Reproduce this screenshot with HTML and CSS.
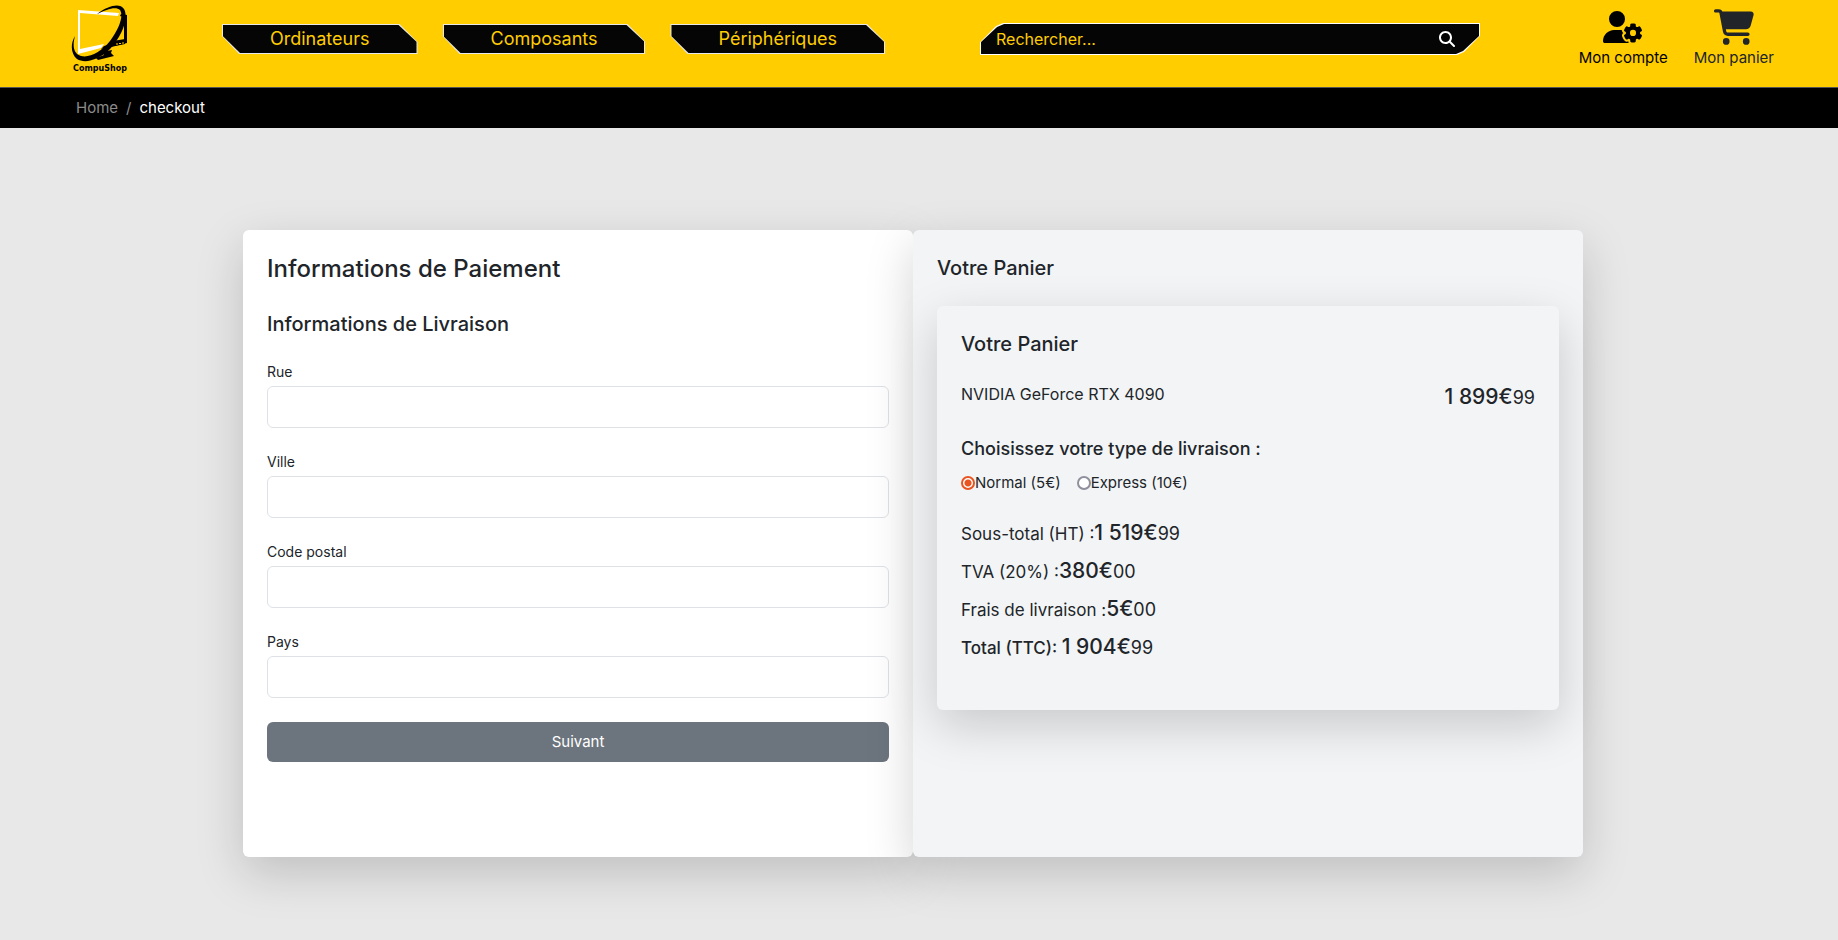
FILE: index.html
```html
<!DOCTYPE html>
<html lang="fr">
<head>
<meta charset="utf-8">
<meta name="viewport" content="width=device-width, initial-scale=1">
<title>CompuShop - checkout</title>
<link rel="stylesheet" href="styles.css">
</head>
<body>
<header class="navbar">
  <a class="logo" href="#" aria-label="CompuShop">
    <svg class="logo-mark" viewBox="0 0 60 58" aria-hidden="true">
      <path d="M51 10L57 11V39L31 45L34 42L54 37V13L50 12Z" fill="#000"/>
      <path d="M43 37L55 35V40L36 44Z" fill="#000"/>
      <path d="M46 40h2M49 39.500h2M52 39h2" stroke="#ffcd00" stroke-width="1"/>
      <path d="M8 6L49 9L48 12L10 9V45L34 40L31 44L8 50Z" fill="#fff"/>
      <path d="M32 48L42 46L41 49L44 52L28 56L26 54L34 51Z" fill="#000"/>
      <path d="M27 10C39 1 50-1 54 5C59 14 52 32 40 45C29 56 15 60 7 55C1 50 0 40 5 32C2 43 4 50 11 52C20 54 31 48 40 37C49 25 54 12 50 6C46 2 37 5 27 10Z" fill="#000"/>
    </svg>
    <span class="logo-name">CompuShop</span>
  </a>
  <nav class="menu">
    <a class="menu-link" href="#"><span>Ordinateurs</span></a>
    <a class="menu-link" href="#"><span>Composants</span></a>
    <a class="menu-link" href="#"><span>Périphériques</span></a>
  </nav>
  <form class="search" role="search">
    <div class="search-box">
      <input class="search-input" type="search" placeholder="Rechercher..." aria-label="Rechercher">
      <button class="search-button" type="button" aria-label="Lancer la recherche">
        <svg viewBox="0 0 512 512" aria-hidden="true"><path fill="currentColor" d="M416 208c0 45.900-14.900 88.300-40 122.700L502.600 457.400c12.500 12.500 12.500 32.800 0 45.300s-32.800 12.500-45.300 0L330.700 376c-34.400 25.200-76.800 40-122.700 40C93.100 416 0 322.900 0 208S93.100 0 208 0S416 93.100 416 208zM208 352a144 144 0 1 0 0-288 144 144 0 1 0 0 288z"/></svg>
      </button>
    </div>
  </form>
  <div class="account">
    <a class="account-link" href="#">
      <svg class="icon-user" viewBox="0 0 640 512" aria-hidden="true"><path fill="currentColor" d="M224 0a128 128 0 1 1 0 256A128 128 0 1 1 224 0zM178.300 304h91.400c11.800 0 23.400 1.200 34.500 3.300c-2.100 18.500 7.400 35.600 21.800 44.800c-16.600 10.600-26.700 31.600-20 53.300c4 12.900 9.400 25.500 16.400 37.600s15.200 23.100 24.400 33c15.700 16.900 39.600 18.400 57.200 8.700v.9c0 9.200 2.700 18.500 7.900 26.300H29.700C13.300 512 0 498.700 0 482.300C0 383.800 79.800 304 178.300 304zM436 218.200c0-7 4.500-13.300 11.300-14.800c10.500-2.400 21.500-3.700 32.700-3.700s22.200 1.300 32.700 3.700c6.800 1.500 11.300 7.800 11.300 14.800v17.700c0 7.800 4.800 14.800 11.600 18.700c6.800 3.900 15.100 4.500 21.800 .6l13.800-7.900c6.100-3.500 13.700-2.700 18.500 2.400c7.600 8.100 14.300 17.200 20.100 27.200s10.300 20.400 13.500 31c2.100 6.700-1.100 13.700-7.200 17.200l-14.400 8.300c-6.500 3.700-10 10.900-10 18.400s3.500 14.700 10 18.400l14.400 8.300c6.100 3.500 9.200 10.500 7.200 17.200c-3.300 10.600-7.800 21-13.500 31s-12.500 19.100-20.100 27.200c-4.800 5.100-12.500 5.900-18.500 2.400l-13.800-7.900c-6.700-3.900-15.100-3.300-21.800 .6c-6.800 3.900-11.600 10.900-11.600 18.700v17.700c0 7-4.500 13.300-11.300 14.800c-10.500 2.400-21.500 3.700-32.700 3.700s-22.200-1.300-32.700-3.700c-6.800-1.500-11.300-7.800-11.300-14.800V467.800c0-7.900-4.900-14.900-11.700-18.900c-6.800-3.900-15.200-4.500-22-.6l-13.500 7.800c-6.100 3.500-13.700 2.700-18.500-2.400c-7.600-8.100-14.300-17.200-20.100-27.200s-10.300-20.400-13.500-31c-2.100-6.700 1.100-13.700 7.200-17.200l14-8.100c6.500-3.800 10.100-11.100 10.100-18.600s-3.500-14.800-10.100-18.600l-14-8.100c-6.100-3.500-9.200-10.500-7.200-17.200c3.300-10.600 7.700-21 13.500-31s12.500-19.100 20.100-27.200c4.800-5.100 12.400-5.900 18.500-2.400l13.600 7.800c6.800 3.900 15.200 3.300 22-.6c6.900-3.900 11.700-11 11.700-18.900V218.200zm92.100 133.500a48.100 48.100 0 1 0-96.100 0 48.100 48.100 0 1 0 96.100 0z"/></svg>
      <span>Mon compte</span>
    </a>
    <a class="account-link account-cart" href="#">
      <svg class="icon-cart" viewBox="0 0 576 512" aria-hidden="true"><path fill="currentColor" d="M0 24C0 10.700 10.700 0 24 0H69.500c22 0 41.500 12.800 50.600 32h411c26.300 0 45.500 25 38.600 50.400l-41 152.300c-8.500 31.400-37 53.300-69.500 53.300H170.700l5.400 28.500c2.200 11.300 12.100 19.500 23.600 19.500H488c13.300 0 24 10.700 24 24s-10.700 24-24 24H199.700c-34.600 0-64.300-24.600-70.700-58.500L77.400 54.500c-.7-3.800-4-6.500-7.900-6.500H24C10.700 48 0 37.300 0 24zM128 464a48 48 0 1 1 96 0 48 48 0 1 1 -96 0zm336-48a48 48 0 1 1 0 96 48 48 0 1 1 0-96z"/></svg>
      <span>Mon panier</span>
    </a>
  </div>
</header>
<nav class="breadcrumb" aria-label="Fil d'Ariane">
  <a class="breadcrumb-link" href="#">Home</a>
  <span class="breadcrumb-separator">/</span>
  <span>checkout</span>
</nav>
<main class="page">
  <div class="checkout">
    <section class="card card-form">
      <h1 class="title-large">Informations de Paiement</h1>
      <h2 class="title">Informations de Livraison</h2>
      <form class="address">
        <div class="field"><label for="street">Rue</label><input id="street" type="text"></div>
        <div class="field"><label for="city">Ville</label><input id="city" type="text"></div>
        <div class="field"><label for="zip">Code postal</label><input id="zip" type="text"></div>
        <div class="field"><label for="country">Pays</label><input id="country" type="text"></div>
        <button class="submit" type="button">Suivant</button>
      </form>
    </section>
    <section class="card card-cart">
      <h2 class="title">Votre Panier</h2>
      <div class="card card-summary">
        <h2 class="title">Votre Panier</h2>
        <div class="item">
          <span>NVIDIA GeForce RTX 4090</span>
          <span class="price">1 899€<small>99</small></span>
        </div>
        <h3 class="subtitle">Choisissez votre type de livraison :</h3>
        <div class="delivery">
          <label class="option"><input type="radio" name="delivery" checked>Normal (5€)</label>
          <label class="option"><input type="radio" name="delivery">Express (10€)</label>
        </div>
        <div class="totals">
          <p>Sous-total (HT) :<span class="price">1 519€<small>99</small></span></p>
          <p>TVA (20%) :<span class="price">380€<small>00</small></span></p>
          <p>Frais de livraison :<span class="price">5€<small>00</small></span></p>
          <p class="grand-total">Total (TTC): <span class="price">1 904€<small>99</small></span></p>
        </div>
      </div>
    </section>
  </div>
</main>
</body>
</html>
```

FILE: styles.css
```css
* {
  box-sizing: border-box;
}

body {
  margin: 0;
  min-height: 100vh;
  background: #e8e8e8;
  color: #212529;
  font: 16px/24px Inter, "Open Sans", sans-serif;
}

h1, h2, h3, p {
  margin: 0;
}

a {
  color: inherit;
  text-decoration: none;
}

input, button {
  font: inherit;
}

svg {
  display: block;
}

.navbar {
  display: flex;
  align-items: flex-start;
  min-height: 88px;
  padding: 0 64px 0 70px;
  background: #ffcd00;
  border-bottom: 1px solid #555;
}

.logo {
  display: flex;
  flex-direction: column;
  align-items: center;
  width: 60px;
  padding-top: 4px;
  color: #000;
}

.logo-mark {
  width: 60px;
  height: 58px;
}

.logo-name {
  font: bold 8px/14px "DejaVu Sans", sans-serif;
}

.menu {
  display: flex;
  gap: 25px;
  margin: 24px 0 0 92px;
}

.menu-link {
  padding: 1px;
  background: #e8e8e8;
  color: #ffcd00;
  font-size: 18px;
  line-height: 28px;
  clip-path: polygon(0 0, calc(100% - 18px) 0, 100% 60%, 100% 100%, 17px 100%, 0 40%);
}

.menu-link span {
  display: block;
  padding: 0 47px;
  background: #050505;
  clip-path: polygon(0 0, calc(100% - 18px) 0, 100% 60%, 100% 100%, 17px 100%, 0 40%);
}

.search {
  flex: 0 1 500px;
  margin: 23px 0 0 95px;
  padding: 1px;
  background: #fff;
  clip-path: polygon(0 60%, 16px 3px, 23px 0, 100% 0, 100% 40%, calc(100% - 16px) calc(100% - 3px), calc(100% - 23px) 100%, 0 100%);
}

.search-box {
  display: flex;
  align-items: center;
  padding: 0 24px 0 15px;
  background: #050505;
  clip-path: polygon(0 60%, 16px 3px, 23px 0, 100% 0, 100% 40%, calc(100% - 16px) calc(100% - 3px), calc(100% - 23px) 100%, 0 100%);
}

.search-input {
  flex: 1;
  min-width: 0;
  height: 30px;
  padding: 0;
  border: 0;
  outline: 0;
  background: none;
  color: #ffcd00;
}

.search-input::placeholder {
  color: #ffcd00;
  opacity: 1;
}

.search-button {
  padding: 0;
  border: 0;
  background: none;
  color: #fff;
}

.search-button svg {
  width: 16px;
  height: 16px;
}

.account {
  display: flex;
  gap: 26px;
  margin-left: auto;
  padding-top: 9px;
  font-size: 15px;
}

.account-link {
  display: flex;
  flex-direction: column;
  align-items: center;
  justify-content: flex-end;
  color: #000;
  white-space: nowrap;
}

.account-cart {
  color: #212529;
}

.icon-user {
  width: 40px;
  height: 32px;
  margin-bottom: 3px;
}

.icon-cart {
  width: 40px;
  height: 36px;
  margin-bottom: 1px;
}

.breadcrumb {
  display: flex;
  gap: 8px;
  padding: 8px 76px;
  background: #000;
  color: #fff;
  font-size: 15px;
}

.breadcrumb-link, .breadcrumb-separator {
  color: #8b8b8b;
}

.page {
  padding: 102px 12px 83px 0;
}

.checkout {
  display: grid;
  grid-template-columns: 1fr 1fr;
  max-width: 1340px;
  margin: 0 auto;
}

.card {
  padding: 24px;
  border-radius: 6px;
  background: #f2f4f6;
  box-shadow: 0 16px 48px rgba(0, 0, 0, 0.175);
}

.card-form {
  padding-bottom: 95px;
  background: #fff;
}

.title-large {
  margin-bottom: 26px;
  font-size: 24px;
  font-weight: 500;
  line-height: 30px;
}

.title {
  margin-bottom: 24px;
  font-size: 20px;
  font-weight: 500;
  line-height: 28px;
}

.address {
  display: flex;
  flex-direction: column;
  gap: 24px;
}

.field {
  display: flex;
  flex-direction: column;
  gap: 4px;
  font-size: 14px;
  line-height: 20px;
}

.field input {
  height: 42px;
  padding: 0 12px;
  border: 1px solid #dee2e6;
  border-radius: 6px;
  background: transparent;
}

.submit {
  height: 40px;
  border: 0;
  border-radius: 6px;
  background: #6c757d;
  color: #fff;
  font-size: 15px;
}

.item {
  display: flex;
  justify-content: space-between;
  margin-bottom: 24px;
}

.price {
  font-size: 21px;
  font-weight: 500;
  line-height: 30px;
}

.totals .price {
  line-height: 20px;
}

.price small {
  font-size: 18px;
  font-weight: 400;
}

.subtitle {
  margin-bottom: 10px;
  font-size: 18px;
  font-weight: 500;
  line-height: 24px;
}

.delivery {
  display: flex;
  gap: 16px;
  margin-bottom: 24px;
  font-size: 15px;
}

.option {
  display: flex;
  align-items: center;
}

.option input {
  width: 14px;
  height: 14px;
  margin: 0;
  appearance: none;
  border: 2px solid #8f8f9d;
  border-radius: 50%;
  background: #fff;
}

.option input:checked {
  border-color: #e95420;
  background: radial-gradient(circle, #e95420 3px, #fff 4px);
}

.totals {
  display: flex;
  flex-direction: column;
  gap: 8px;
  padding-bottom: 23px;
  font-size: 17px;
  line-height: 30px;
}

.grand-total {
  font-weight: 500;
}
```
